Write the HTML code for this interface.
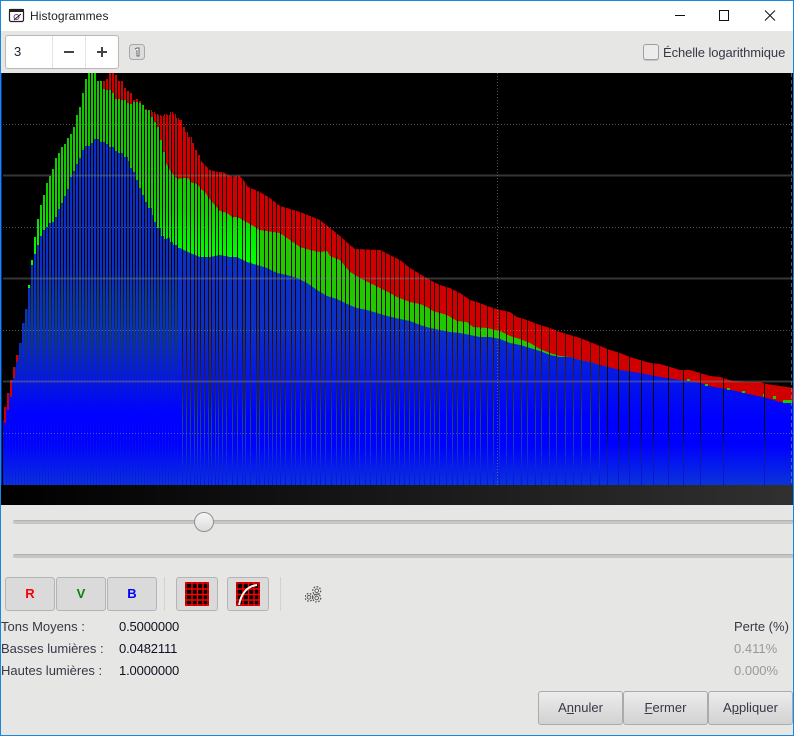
<!DOCTYPE html>
<html lang="fr"><head><meta charset="utf-8"><title>Histogrammes</title>
<style>
html,body{margin:0;padding:0}
body{width:794px;height:736px;position:relative;overflow:hidden;background:#e6e6e5;font-family:"Liberation Sans",sans-serif;font-size:13px;color:#3a3645}
.a{position:absolute;white-space:nowrap}
.t{line-height:16px}
.btn{position:absolute;box-sizing:border-box;border:1px solid #b4b4b4;border-radius:3px;background:#dadada}
.b2{background:linear-gradient(#ececec,#d2d2d2);border-color:#ababab;height:34px;top:691px;width:85px;text-align:center;line-height:32px;font-size:13px;color:#3a3645}
.c{font:bold 13px/32px "Liberation Sans",sans-serif;text-align:center;top:577px;height:34px;width:50px}
</style></head><body>
<div class="a" style="left:0;top:0;width:794px;height:31px;background:#fff"></div>
<svg class="a" style="left:8px;top:8px" width="18" height="15" viewBox="0 0 18 15"><rect x="1.500" y="1.500" width="14" height="12" rx="1.500" fill="#fff" stroke="#222" stroke-width="1.200"/><rect x="1" y="1" width="15" height="3" fill="#222"/><circle cx="8.500" cy="9" r="2.500" fill="none" stroke="#7a3a8a"/><path d="M6 12 13 6" stroke="#222"/></svg>
<div class="a t" style="left:30px;top:8px;color:#222;font-size:12px;letter-spacing:.1px">Histogrammes</div>
<svg class="a" style="left:670px;top:6px" width="115" height="20"><path d="M5 9.500H15" stroke="#111"/><rect x="49.500" y="4.500" width="9" height="10" fill="none" stroke="#111"/><path d="M95 4.500 105 14.500M105 4.500 95 14.500" stroke="#111"/></svg>

<div class="a" style="left:5px;top:35px;width:114px;height:34px;box-sizing:border-box;background:#fff;border:1px solid #b8b8b8;border-radius:3px"></div>
<div class="a" style="left:52px;top:36px;width:1px;height:32px;background:#e4e4e4"></div>
<div class="a" style="left:85px;top:36px;width:1px;height:32px;background:#e4e4e4"></div>
<div class="a t" style="left:14px;top:44px;color:#223">3</div>
<svg class="a" style="left:60px;top:44px" width="52" height="16"><path d="M4 8H14M37 8H47M42 3V13" stroke="#444" stroke-width="2"/></svg>
<svg class="a" style="left:129px;top:44px" width="16" height="16"><rect x=".5" y=".5" width="15" height="15" rx="3" fill="#ddd" stroke="#a8a8a8"/><path d="M6 5 8 4H10V12H8V6" fill="#fff" stroke="#666"/></svg>
<div class="a" style="left:643px;top:44px;width:16px;height:16px;box-sizing:border-box;border:1px solid #a0a0a0;border-radius:3px;background:#ececec;box-shadow:0 1px 0 #c4c4c4"></div>
<div class="a t" style="left:663px;top:45px;letter-spacing:-.1px">Échelle logarithmique</div>

<svg class="a" style="left:0;top:73px" width="794" height="432" viewBox="0 73 794 432">
<defs>
<linearGradient id="blue" gradientUnits="userSpaceOnUse" x1="0" y1="73" x2="0" y2="485"><stop offset="0" stop-color="#0a30c8"/><stop offset=".624" stop-color="#0a30c8"/><stop offset=".842" stop-color="#0000ff"/><stop offset=".903" stop-color="#0000ff"/><stop offset="1" stop-color="#0a34d8"/></linearGradient>
<linearGradient id="gv" gradientUnits="userSpaceOnUse" x1="0" y1="73" x2="0" y2="485"><stop offset=".14" stop-color="#14c400"/><stop offset=".33" stop-color="#10d000"/><stop offset=".4" stop-color="#00f000"/><stop offset=".45" stop-color="#00ff00"/></linearGradient>
<linearGradient id="g1" gradientUnits="userSpaceOnUse" x1="0" y1="73" x2="0" y2="485"><stop offset="0" stop-color="#000"/><stop offset=".45" stop-color="#000"/><stop offset=".55" stop-color="#102808"/><stop offset=".65" stop-color="#153a40"/><stop offset=".75" stop-color="#0a20c0"/><stop offset=".82" stop-color="#0000ff"/><stop offset="1" stop-color="#0a20e0"/></linearGradient>
<linearGradient id="g2" gradientUnits="userSpaceOnUse" x1="0" y1="73" x2="0" y2="485"><stop offset="0" stop-color="#000"/><stop offset=".55" stop-color="#1a0500"/><stop offset=".65" stop-color="#301000"/><stop offset=".77" stop-color="#2a3010"/><stop offset=".84" stop-color="#205050"/><stop offset=".9" stop-color="#1040b0"/><stop offset="1" stop-color="#0a10f0"/></linearGradient>
<linearGradient id="g3" gradientUnits="userSpaceOnUse" x1="0" y1="73" x2="0" y2="485"><stop offset="0" stop-color="#000"/><stop offset=".84" stop-color="#000"/><stop offset=".92" stop-color="#102080"/><stop offset="1" stop-color="#0a10f0"/></linearGradient>
<linearGradient id="ramp" x1="0" x2="1" y1="0" y2="0"><stop offset="0" stop-color="#000"/><stop offset="1" stop-color="#303030"/></linearGradient>
<path id="R" d="M3 485V420H4V407H7V393H10V380H13V367H16V355H19V485ZM103 485V81H106V79H109V73H115V75H118V81H124V88H127V91H130V93H133V100H136V99H139V101H142V105H145V109H148V110H152V112H155V114H158V115H161V116H164V114H167V115H170V112H173V114H176V118H179V120H182V127H185V132H188V137H192V143H195V150H198V155H200V159L203 163 207 167 210 170 218 172 223 172 228 175 233 177 238 175 243 179 248 187 260 192 270 198 280 206 290 209 300 212 310 216 320 220 330 228 340 236 350 245 355 249 380 250 390 255 400 260 410 268 420 274 430 280 440 285 450 288 460 293 470 300 480 303 490 307 500 310 510 312 517 317 527 320 540 325 550 328 560 332 570 335 580 338 590 342 600 346 610 350 620 353 630 357 640 360 650 363 660 364 670 367 680 370 690 370 700 373 710 376 720 377 733 381 747 382 760 382 767 384 780 386 794 388V485Z"/>
<path id="G" d="M28 485V285H31V260H34V237H37V219H40V205H43V195H46V183H49V176H52V169H55V158H58V153H61V147H64V144H67V138H70V134H73V127H76V115H79V107H82V93H85V79H88V73H97V81H103V89H106V90H112V93H115V99H121V100H127V103H130V104H133V102H139V103H142V105H145V110H151V117H154V122H157V127H160V140H163V152H166V163L170 170 175 177 179 179 183 178 188 178 192 183 195 183 198 185 202 190 205 192 208 197 213 203 220 211 227 213 232 217 237 217 243 220 248 223 260 230 280 233 290 240 300 247 310 250 320 252 327 251 330 256 340 260 350 272 360 278 370 283 380 288 390 293 397 297 410 302 420 304 427 307 433 311 440 313 447 315 457 321 467 322 473 327 487 328 500 331 510 336 520 339 530 343 540 349 550 353 560 356 570 357 580 360 590 362 600 365V485Z"/>
<path id="B" d="M3 485V423H7V410H10V397H13V378H16V362H19V343H22V323H25V309H28V288H31V265H34V254H37V245H40V236H43V230H46V227H49V223H52V222H55V217H58V209H61V203H64V196H67V189H70V177H73V171H76V164H79V158H82V150H85V146H91V143H94V139H100V142H106V144H109V147H115V151H118V153H124V157H128V161H130V168H133V172H136V180H139V188H142V195H145V202H148V208H152V215H154V222H157V228H161V236H164V239H167V238H170V242H173V245H177V248L180 248 190 253 200 257 210 257 220 255 230 257 237 257 247 262 257 265 267 268 277 273 287 275 297 278 307 283 317 290 327 296 337 299 347 304 357 308 367 310 377 313 387 316 400 319 410 321 420 325 430 328 440 330 450 332 460 333 470 335 480 337 490 337 500 339 510 343 520 345 530 348 540 351 550 355 560 357 570 357 580 360 590 362 600 365 608 367 620 370 640 373 660 377 680 380 700 383 713 387 727 389 740 392 753 395 767 398 780 402 794 403V485Z"/>
<clipPath id="cp"><use href="#R"/><use href="#G"/><use href="#B"/></clipPath>
<clipPath id="cg"><use href="#G"/></clipPath>
</defs>
<rect x="0" y="73" width="794" height="412" fill="#000"/>
<rect x="1" y="73" width="1" height="412" fill="#0a30a0"/>
<use href="#R" fill="#d00000"/>
<use href="#G" fill="#20c800"/>
<rect x="28" y="73" width="232" height="300" fill="url(#gv)" clip-path="url(#cg)"/>
<use href="#B" fill="url(#blue)"/>
<path fill="#14cc00" shape-rendering="crispEdges" d="M687 379h3v2h-3zM705 384h3v2h-3zM727 388h3v2h-3zM742 391h3v2h-3zM763 394h2v3h-2zM773 396h3v3h-3zM783 400h9v3h-9z"/>
<g clip-path="url(#cp)">
<line x1="3" y1="279" x2="180" y2="279" stroke="url(#g1)" stroke-width="412" stroke-dasharray="1 2" shape-rendering="crispEdges"/>
<path fill="none" stroke="url(#g2)" stroke-width="1" shape-rendering="crispEdges" transform="translate(.5 0)" d="M182 73V485M186 73V485M190 73V485M194 73V485M197 73V485M200 73V485M204 73V485M208 73V485M211 73V485M215 73V485M218 73V485M222 73V485M226 73V485M232 73V485M237 73V485M242 73V485M245 73V485M250 73V485M256 73V485M259 73V485M264 73V485M268 73V485M272 73V485M276 73V485M280 73V485M285 73V485M291 73V485M295 73V485M300 73V485M305 73V485M311 73V485M316 73V485M320 73V485M325 73V485M331 73V485M336 73V485M341 73V485M345 73V485M349 73V485M355 73V485M359 73V485M365 73V485M370 73V485M376 73V485M381 73V485M385 73V485M390 73V485M394 73V485M399 73V485M404 73V485M409 73V485M414 73V485M419 73V485M424 73V485M430 73V485M434 73V485M439 73V485M446 73V485M452 73V485M457 73V485M463 73V485M469 73V485M475 73V485M480 73V485M487 73V485M493 73V485M499 73V485M506 73V485M513 73V485M521 73V485M527 73V485M535 73V485M541 73V485M549 73V485M556 73V485M565 73V485M573 73V485M581 73V485M590 73V485M599 73V485"/>
<path fill="none" stroke="url(#g3)" stroke-width="1" shape-rendering="crispEdges" transform="translate(.5 0)" d="M607 73V485M618 73V485M629 73V485M641 73V485M653 73V485M668 73V485M683 73V485M700 73V485M723 73V485M764 73V485"/>
</g>
<g shape-rendering="crispEdges" fill="none">
<path d="M3 175.500H794M3 278.500H794M3 381.500H794" stroke="#808080" stroke-opacity=".42" stroke-width="2"/>
<path d="M3 124.500H794M3 227.500H794M3 330.500H794M3 433.500H794" stroke="#909090" stroke-opacity=".55" stroke-dasharray="1 2"/>
<path d="M497.500 73V485" stroke="#909090" stroke-opacity=".55" stroke-dasharray="1 2"/>
<path d="M791.500 73V485" stroke="#909090" stroke-opacity=".6" stroke-dasharray="4 3"/>
</g>
<rect x="0" y="485" width="794" height="20" fill="url(#ramp)"/>
</svg>

<div class="a" style="left:13px;top:520px;width:781px;height:4px;background:#c6c6c6;border-top:1px solid #b2b2b2;box-sizing:border-box;border-radius:2px 0 0 2px"></div>
<div class="a" style="left:194px;top:512px;width:20px;height:20px;box-sizing:border-box;border:1px solid #8f8f8f;border-radius:50%;background:linear-gradient(#f6f6f6,#dcdcdc)"></div>
<div class="a" style="left:13px;top:554px;width:781px;height:4px;background:#c6c6c6;border-top:1px solid #b2b2b2;box-sizing:border-box;border-radius:2px 0 0 2px"></div>

<div class="btn c" style="left:5px;color:#f00">R</div>
<div class="btn c" style="left:56px;color:#0a820a">V</div>
<div class="btn c" style="left:107px;color:#00f">B</div>
<div class="a" style="left:164px;top:577px;width:1px;height:34px;background:#d2d2d2"></div>
<div class="btn" style="left:176px;top:577px;width:42px;height:34px"></div>
<div class="btn" style="left:227px;top:577px;width:42px;height:34px"></div>
<svg class="a" style="left:185px;top:582px" width="24" height="24"><rect width="24" height="24" fill="#000"/><path d="M1 0V24M7 0V24M12.500 0V24M18 0V24M23 0V24M0 1H24M0 7H24M0 12.500H24M0 18H24M0 23H24" stroke="#f00" stroke-width="1.400"/></svg>
<svg class="a" style="left:236px;top:582px" width="24" height="24"><rect width="24" height="24" fill="#000"/><path d="M1 0V24M7 0V24M12.500 0V24M18 0V24M23 0V24M0 1H24M0 7H24M0 12.500H24M0 18H24M0 23H24" stroke="#f00" stroke-width="1.400"/><path d="M3 23C5 12 11 4 21 3" fill="none" stroke="#f4f4f4" stroke-width="2"/></svg>
<div class="a" style="left:280px;top:577px;width:1px;height:34px;background:#d2d2d2"></div>
<svg class="a" style="left:305px;top:585px" width="17" height="18" fill="none" stroke="#555"><g stroke-width="1.300" stroke-dasharray="1.600 1.500"><circle cx="11.700" cy="5.700" r="4"/><circle cx="4" cy="12.300" r="3.800"/><circle cx="11.700" cy="13" r="4"/></g><g stroke-width=".9"><circle cx="11.700" cy="5.700" r="1.800"/><circle cx="4" cy="12.300" r="1.800"/><circle cx="11.700" cy="13" r="1.800"/></g></svg>

<div class="a t" style="left:1px;top:619px">Tons Moyens :</div>
<div class="a t" style="left:1px;top:641px">Basses lumières :</div>
<div class="a t" style="left:1px;top:663px">Hautes lumières :</div>
<div class="a t" style="left:119px;top:619px;color:#112;letter-spacing:-.15px">0.5000000</div>
<div class="a t" style="left:119px;top:641px;color:#112;letter-spacing:-.15px">0.0482111</div>
<div class="a t" style="left:119px;top:663px;color:#112;letter-spacing:-.15px">1.0000000</div>
<div class="a t" style="left:734px;top:619px">Perte (%)</div>
<div class="a t" style="left:734px;top:641px;color:#999">0.411%</div>
<div class="a t" style="left:734px;top:663px;color:#999">0.000%</div>

<div class="btn b2" style="left:538px">A<u>n</u>nuler</div>
<div class="btn b2" style="left:623px"><u>F</u>ermer</div>
<div class="btn b2" style="left:708px">A<u>p</u>pliquer</div>

<div class="a" style="left:0;top:0;width:794px;height:1px;background:#1a86dc"></div>
<div class="a" style="left:0;top:0;width:1px;height:736px;background:#1a86dc"></div>
<div class="a" style="left:793px;top:0;width:1px;height:736px;background:#1a86dc"></div>
<div class="a" style="left:0;top:735px;width:794px;height:1px;background:#1a86dc"></div>
</body></html>
